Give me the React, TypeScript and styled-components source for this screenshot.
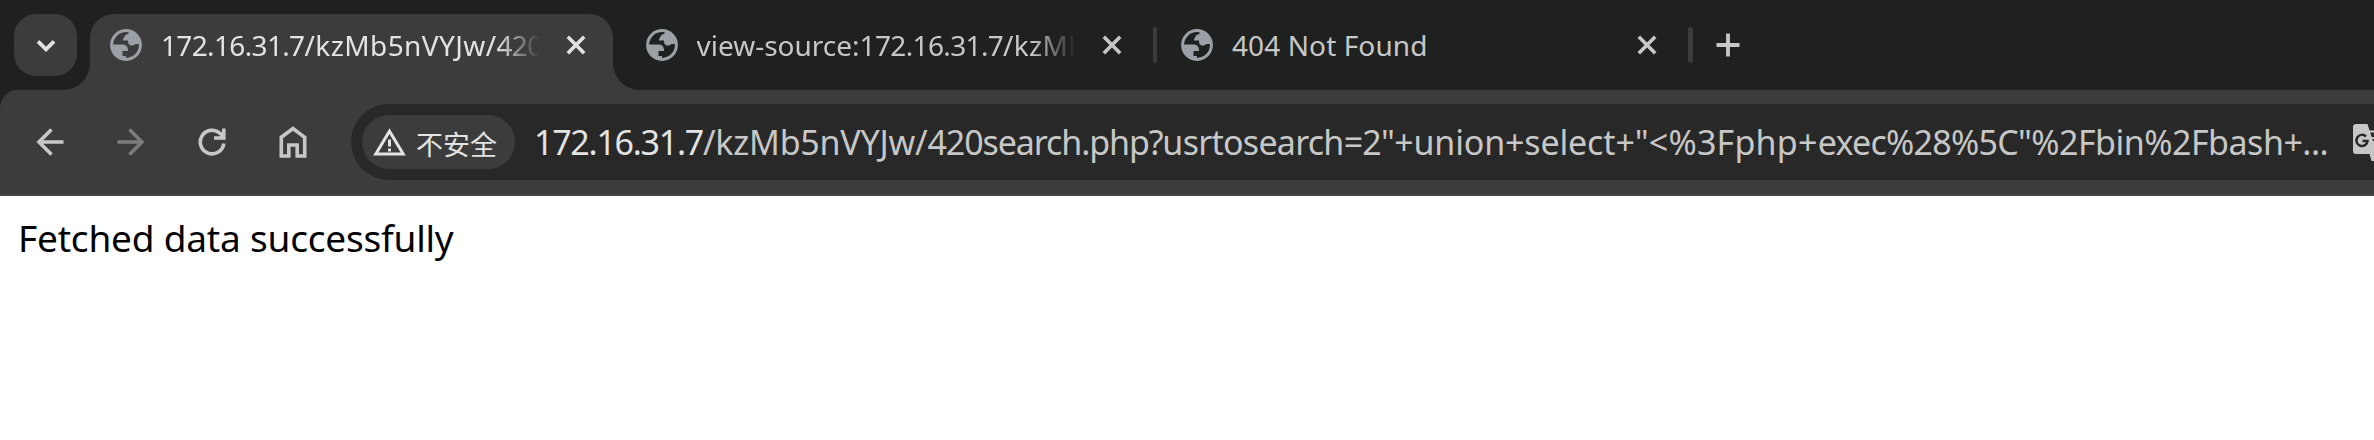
import React from "react";
import styled, { createGlobalStyle } from "styled-components";

const GlobalStyle = createGlobalStyle`
  * { box-sizing: border-box; }
  html, body { margin: 0; padding: 0; background: #ffffff; }
  body { font-family: "Noto Sans", "Noto Sans CJK SC", sans-serif; overflow: hidden; }
  svg { flex: none; }
`;

const Window = styled.div`
  display: flex;
  flex-direction: column;
  width: 2374px;
  height: 440px;
  overflow: hidden;
  background: #1f2120;
`;

const TabStrip = styled.header`
  display: flex;
  height: 90px;
  padding-left: 14px;
`;

const TabSearch = styled.button`
  display: grid;
  place-items: center;
  width: 63px;
  height: 62px;
  margin: 14px 13px 0 0;
  padding: 0;
  border: 0;
  border-radius: 22px;
  background: #3c3c3c;
`;

const Tab = styled.div<{ $active?: boolean }>`
  position: relative;
  display: flex;
  align-items: center;
  width: ${(p) => (p.$active ? 522.5 : 535.5)}px;
  margin-right: ${(p) => (p.$active ? 13 : 0)}px;
  height: ${(p) => (p.$active ? 76.5 : 63)}px;
  margin-top: 13.5px;
  padding: 0 0 ${(p) => (p.$active ? 13.5 : 0)}px 20px;
  border-radius: 24px 24px 0 0;
  background: ${(p) => (p.$active ? "#3c3c3c" : "transparent")};
  color: ${(p) => (p.$active ? "#e3e3e3" : "#c7c7c7")};
`;

const Flare = styled.i<{ $side: "left" | "right" }>`
  position: absolute;
  bottom: 0;
  ${(p) => p.$side}: -27px;
  width: 27px;
  height: 27px;
  background: radial-gradient(
    circle at ${(p) => (p.$side === "left" ? "0 0" : "100% 0")},
    transparent 26.5px,
    #3c3c3c 27.5px
  );
`;

const TabTitle = styled.span<{ $fade?: boolean }>`
  width: 379px;
  margin: 0 25px 0 19px;
  overflow: hidden;
  white-space: nowrap;
  font-size: 28px;
  line-height: 40px;
  mask-image: ${(p) => (p.$fade ? "linear-gradient(to right, #000 336px, transparent 379px)" : "none")};
`;

const Run = styled.span<{ $spacing: number; $host?: boolean }>`
  letter-spacing: ${(p) => p.$spacing}px;
  color: ${(p) => (p.$host ? "#e3e3e3" : "inherit")};
`;

const Separator = styled.i`
  position: absolute;
  right: 4px;
  top: 13.5px;
  width: 4.5px;
  height: 36px;
  border-radius: 2px;
  background: #3c3c3c;
`;

const NewTab = styled.button`
  display: grid;
  place-items: center;
  width: 63px;
  height: 63px;
  margin-top: 13.5px;
  padding: 0;
  border: 0;
  background: none;
`;

const Toolbar = styled.nav`
  display: flex;
  align-items: center;
  height: 106px;
  padding: 0 0 0 9px;
  border-bottom: 2px solid #474747;
  border-radius: 18px 0 0 0;
  background: #3c3c3c;
`;

const NavButton = styled.button`
  display: grid;
  place-items: center;
  flex: none;
  width: 81px;
  height: 72px;
  padding: 0;
  border: 0;
  background: none;
`;

const AddressBar = styled.div`
  display: flex;
  align-items: center;
  flex: 1;
  min-width: 0;
  height: 76px;
  margin-left: 18px;
  padding-left: 11px;
  overflow: hidden;
  border-radius: 38px 0 0 38px;
  background: #282828;
`;

const SecurityChip = styled.div`
  display: flex;
  align-items: center;
  flex: none;
  width: 153px;
  height: 54px;
  padding-left: 11px;
  border-radius: 27px;
  background: #3c3c3c;
  color: #e3e3e3;
`;

const ChipLabel = styled.span`
  margin: 4px 0 0 10px;
  font: 27px/40px "Noto Sans CJK SC", sans-serif;
  white-space: nowrap;
`;

const Url = styled.div`
  flex: none;
  width: 1819px;
  margin-left: 19px;
  color: #c7c7c7;
  font-size: 34px;
  line-height: 50px;
  white-space: nowrap;
`;

const Page = styled.main`
  flex: 1;
  padding: 18px;
  background: #ffffff;
  color: #000000;
  font-size: 37px;
  line-height: 48px;
  letter-spacing: -0.2px;
`;

const Globe = () => (
  <svg width="32" height="32" viewBox="0 0 32 32" fill="none">
    <circle cx="16" cy="16" r="14.4" stroke="#9aa0a6" strokeWidth="3" />
    <path
      d="M18.500 2.500v2.500c-2 .4-3.500 1-4 2.500-.5 1.500-1.500 1.500-1.500 4h5c0 3 .8 5 4 5 2.500 0 2.500-1.500 4-1.500h4C30 8 25 3 18.500 2.500z"
      fill="#9aa0a6"
    />
    <path
      d="M2.500 15.500H12c4 0 6 2 6 6.500h-5.500v5H16v3C8 30 2 24 2.500 15.500z"
      fill="#9aa0a6"
    />
  </svg>
);

const Close = () => (
  <svg width="22" height="22" viewBox="0 0 22 22" stroke="currentColor" strokeWidth="3.600">
    <path d="M2.800 2.800l16.400 16.400M19.200 2.800L2.800 19.200" />
  </svg>
);

type TextRun = { text: string; spacing: number; host?: boolean };

const tabs: { id: string; runs: TextRun[]; active?: boolean; fade?: boolean; separated?: boolean }[] = [
  {
    id: "search",
    active: true,
    fade: true,
    runs: [
      { text: "172.16.31.7", spacing: -0.65 },
      { text: "/kzMb5nVYJw/", spacing: 0.4 },
      { text: "420", spacing: -0.65 },
    ],
  },
  {
    id: "source",
    fade: true,
    separated: true,
    runs: [
      { text: "view-source:", spacing: 0 },
      { text: "172.16.31.7", spacing: -0.65 },
      { text: "/kzMb", spacing: 0.3 },
    ],
  },
  { id: "missing", separated: true, runs: [{ text: "404 Not Found", spacing: 0.1 }] },
];

const urlRuns: TextRun[] = [
  { text: "172.16.31.7", spacing: -1.27, host: true },
  { text: "/kzMb5nVYJw/", spacing: -0.23 },
  { text: "420search.php?", spacing: -1.1 },
  { text: "usrtosearch=2\"", spacing: -0.74 },
  { text: "+union+select+", spacing: -0.16 },
  { text: "\"<%3Fphp+", spacing: 0.22 },
  { text: "exec%28%5C\"", spacing: -0.72 },
  { text: "%2Fbin%2Fbash+...", spacing: -0.5 },
];

const Runs = ({ runs }: { runs: TextRun[] }) => (
  <>
    {runs.map((run) => (
      <Run key={run.text} $spacing={run.spacing} $host={run.host}>{run.text}</Run>
    ))}
  </>
);

export default function App() {
  return (
    <Window>
      <GlobalStyle />
      <TabStrip>
        <TabSearch aria-label="Search tabs">
          <svg width="24" height="24" viewBox="0 0 24 24" fill="none" stroke="#e3e3e3" strokeWidth="3.800">
            <path d="M4 8.300l8 8 8-8" />
          </svg>
        </TabSearch>
        {tabs.map((tab) => (
          <Tab key={tab.id} $active={tab.active}>
            {tab.active && <Flare $side="left" />}
            {tab.active && <Flare $side="right" />}
            <Globe />
            <TabTitle $fade={tab.fade}><Runs runs={tab.runs} /></TabTitle>
            <Close />
            {tab.separated && <Separator />}
          </Tab>
        ))}
        <NewTab aria-label="New tab">
          <svg width="24" height="24" viewBox="0 0 24 24" stroke="#c7c7c7" strokeWidth="3.800">
            <path d="M12 .5v23M.5 12h23" />
          </svg>
        </NewTab>
      </TabStrip>
      <Toolbar>
        <NavButton aria-label="Back">
          <svg width="30" height="30" viewBox="0 0 30 30" fill="none" stroke="#c7c7c7" strokeWidth="3.600">
            <path d="M28.500 15H4M16.500 2.500L4 15l12.500 12.500" />
          </svg>
        </NavButton>
        <NavButton aria-label="Forward">
          <svg width="30" height="30" viewBox="0 0 30 30" fill="none" stroke="#7c7c7c" strokeWidth="3.600">
            <path d="M1.500 15H26M13.500 2.500L26 15 13.500 27.500" />
          </svg>
        </NavButton>
        <NavButton aria-label="Reload">
          <svg width="30" height="30" viewBox="0 0 30 30" fill="none" stroke="#c7c7c7" strokeWidth="3.600">
            <path d="M26.800 16.500A11.800 11.800 0 1 1 23 6.300L26.500 10M26.800 1.500v9.500H17" />
          </svg>
        </NavButton>
        <NavButton aria-label="Home">
          <svg width="30" height="34" viewBox="0 0 30 34" fill="none" stroke="#c7c7c7" strokeWidth="3.600">
            <path d="M3.300 12.300L15 3.500l11.700 8.800V31H19.200V20h-8.400v11H3.300z" />
          </svg>
        </NavButton>
        <AddressBar>
          <SecurityChip>
            <svg width="33" height="28" viewBox="0 0 33 28" fill="none" stroke="#e3e3e3" strokeWidth="3">
              <path d="M2.800 26L16.500 3.200 30.200 26z" />
              <path d="M16.500 11.500v7M16.500 20.500v3" />
            </svg>
            <ChipLabel>不安全</ChipLabel>
          </SecurityChip>
          <Url><Runs runs={urlRuns} /></Url>
          <svg width="42" height="37" viewBox="0 0 42 37">
            <path d="M15.500 7.500H38v28H24z" fill="none" stroke="#c7c7c7" strokeWidth="2" />
            <path d="M17.500 14H29M21 17.500q2 4 6 6M23 14q-.5 3-3 5" fill="none" stroke="#c7c7c7" strokeWidth="2" />
            <path d="M3 0h11.500L24 30v7h-5.500l-2-7H3q-3 0-3-3V3q0-3 3-3z" fill="#c7c7c7" />
            <path d="M13 12.500A5.600 5.600 0 1 0 14.600 17H9.500" fill="none" stroke="#282828" strokeWidth="2.500" />
          </svg>
        </AddressBar>
      </Toolbar>
      <Page>Fetched data successfully</Page>
    </Window>
  );
}
